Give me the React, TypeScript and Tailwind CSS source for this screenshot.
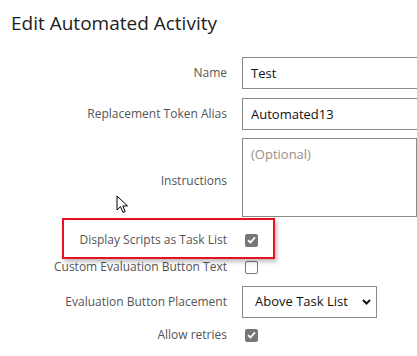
import { useState } from 'react';

function Check({ checked }: { checked: boolean }) {
  if (!checked) {
    return <span className="block w-[13px] h-[13px] rounded-[2px] border border-[#767676] bg-white" />;
  }
  return (
    <span className="flex w-[13px] h-[13px] rounded-[2px] bg-[#767676] items-center justify-center">
      <svg width="9" height="8" viewBox="0 0 9 8">
        <path d="M1 4.2 L3.4 6.5 L8 1.3" fill="none" stroke="#fff" strokeWidth="1.8" />
      </svg>
    </span>
  );
}

function Cursor() {
  return (
    <svg className="absolute left-[116px] top-[195px]" width="14" height="20" viewBox="0 0 14 20">
      <path
        d="M1 1 L1 15 L4.5 11.6 L7 17.5 L9.2 16.6 L6.8 10.9 L11.5 10.9 Z"
        fill="#fff"
        stroke="#000"
        strokeWidth="1"
        strokeLinejoin="round"
      />
    </svg>
  );
}

export default function App() {
  const [name, setName] = useState('Test');
  const [alias, setAlias] = useState('Automated13');
  const [placement, setPlacement] = useState('above');

  const label = 'w-[227px] shrink-0 text-right text-[12px] text-[#555]';

  return (
    <div
      className="relative w-[417px] h-[356px] overflow-hidden bg-white"
      style={{ fontFamily: '"Segoe UI", "Open Sans", sans-serif' }}
    >
      <h1 className="pl-[11px] pt-[9px] text-[19px] leading-[28px] text-[#222]">Edit Automated Activity</h1>

      <div className="mt-[20px] flex flex-col">
        <div className="flex items-center gap-[15px] h-[32px]">
          <label className={label}>Name</label>
          <input
            value={name}
            onChange={e => setName(e.target.value)}
            className="w-[200px] h-[32px] border border-[#8a8a8a] px-[8px] text-[13px] text-[#111] outline-none"
          />
        </div>

        <div className="mt-[9px] flex items-center gap-[15px] h-[32px]">
          <label className={label}>Replacement Token Alias</label>
          <input
            value={alias}
            onChange={e => setAlias(e.target.value)}
            className="w-[200px] h-[32px] border border-[#8a8a8a] px-[8px] text-[13px] text-[#111] outline-none"
          />
        </div>

        <div className="mt-[8px] flex items-center gap-[15px] h-[79px]">
          <label className={`${label} pt-[6px]`}>Instructions</label>
          <textarea
            placeholder="(Optional)"
            className="w-[200px] h-[79px] border border-[#8a8a8a] px-[8px] pt-[6px] text-[13px] resize-none outline-none placeholder:text-[#9a8f84]"
          />
        </div>

        <div className="mt-[12px] flex items-center gap-[18px] h-[22px]">
          <label className={label}>Display Scripts as Task List</label>
          <Check checked />
        </div>

        <div className="mt-[6px] flex items-center gap-[18px] h-[20px]">
          <label className={label}>Custom Evaluation Button Text</label>
          <Check checked={false} />
        </div>

        <div className="mt-[9px] flex items-center gap-[15px] h-[32px]">
          <label className={label}>Evaluation Button Placement</label>
          <div className="relative w-[135px] h-[32px] border border-[#8a8a8a] flex items-center">
            <select
              value={placement}
              onChange={e => setPlacement(e.target.value)}
              className="appearance-none w-full h-full pl-[12px] pr-[18px] text-[13px] text-[#111] bg-transparent outline-none"
            >
              <option value="above">Above Task List</option>
              <option value="below">Below Task List</option>
            </select>
            <svg className="absolute right-[5px] top-[12px] pointer-events-none" width="9" height="6" viewBox="0 0 9 6">
              <path d="M1 1 L4.5 4.5 L8 1" fill="none" stroke="#111" strokeWidth="2" />
            </svg>
          </div>
        </div>

        <div className="mt-[7px] flex items-center gap-[18px] h-[20px]">
          <label className={label}>Allow retries</label>
          <Check checked />
        </div>
      </div>

      <div className="absolute left-[62px] top-[218px] w-[213px] h-[41px] border-2 border-[#e81123] shadow-[2px_3px_4px_rgba(0,0,0,0.25)] pointer-events-none" />

      <Cursor />
    </div>
  );
}
